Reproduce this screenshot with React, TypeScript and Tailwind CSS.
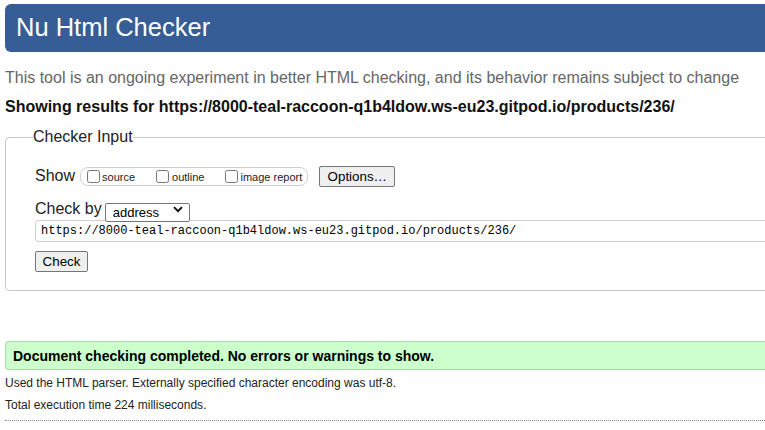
import React from "react";

const sans = { fontFamily: '"Liberation Sans", Arial, sans-serif' };

export default function App() {
  return (
    <div
      className="w-[765px] h-[430px] overflow-hidden bg-white pl-[5px] pt-[4px] text-[#222]"
      style={sans}
    >
      <div className="h-[48px] bg-[#365d95] rounded-l-[6px] flex items-center pl-[11px]">
        <h1 className="text-[25.5px] leading-[30px] -mt-[2px] text-white font-normal font-['Liberation_Sans',Arial,sans-serif]">
          Nu Html Checker
        </h1>
      </div>

      <p className="mt-[17px] text-[16px] leading-[18px] text-[#666] whitespace-nowrap">
        This tool is an ongoing experiment in better HTML checking, and its behavior remains subject to change
      </p>
      <p className="mt-[11px] text-[16px] leading-[18px] font-bold text-[#111] whitespace-nowrap">
        Showing results for https://8000-teal-raccoon-q1b4ldow.ws-eu23.gitpod.io/products/236/
      </p>

      <fieldset className="mt-[11px] border border-[#c8c8c8] border-r-0 rounded-l-[5px] pl-[29px] pt-[19px] pb-[17px]">
        <legend className="-ml-[2px] text-[16px] leading-[20px] text-[#222]">Checker Input</legend>

        <div className="h-[20px] flex items-center">
          <span className="text-[16px] leading-[18px]">Show</span>
          <div className="ml-[5px] h-[19px] border border-[#cfcfcf] rounded-[8px] flex items-center pl-[6px] pr-[5px]">
            <label className="flex items-center">
              <input type="checkbox" className="m-0 w-[13px] h-[13px]" />
              <span className="ml-[2px] text-[11px] leading-[13px] mt-[2px]">source</span>
            </label>
            <label className="flex items-center ml-[21px]">
              <input type="checkbox" className="m-0 w-[13px] h-[13px]" />
              <span className="ml-[3px] text-[11px] leading-[13px] mt-[2px]">outline</span>
            </label>
            <label className="flex items-center ml-[21px]">
              <input type="checkbox" className="m-0 w-[13px] h-[13px]" />
              <span className="ml-[2px] text-[11px] leading-[13px] mt-[2px]">image report</span>
            </label>
          </div>
          <button className="ml-[11px] h-[21px] w-[76px] border border-[#767676] rounded-[2px] bg-[#efefef] text-[13.33px] leading-[15px] text-black">
            Options…
          </button>
        </div>

        <div className="mt-[13px] h-[20px] flex items-center">
          <span className="text-[16px] leading-[18px]">Check by</span>
          <div className="relative ml-[3px] h-[19px] w-[85px]">
            <select className="appearance-none w-full h-full border border-[#767676] rounded-[2px] bg-white pl-[7px] text-[13px] leading-[15px] text-black">
              <option>address</option>
            </select>
            <svg
              className="absolute right-[7px] top-[6px] pointer-events-none"
              width="10"
              height="7"
              viewBox="0 0 10 7"
            >
              <path d="M1 1.2 L5 5.2 L9 1.2" fill="none" stroke="#000" strokeWidth="1.8" />
            </svg>
          </div>
        </div>

        <div className="mt-[1px] h-[22px] border border-[#cfcfcf] border-r-0 rounded-l-[4px] flex items-center pl-[5px]">
          <span className="text-[12px] leading-[14px] text-black whitespace-nowrap font-['Liberation_Mono',monospace]">
            https://8000-teal-raccoon-q1b4ldow.ws-eu23.gitpod.io/products/236/
          </span>
        </div>

        <div className="mt-[7px]">
          <button className="h-[21px] w-[53px] border border-[#767676] rounded-[2px] bg-[#efefef] text-[13.33px] leading-[15px] text-black">
            Check
          </button>
        </div>
      </fieldset>

      <div className="mt-[50px] h-[29px] bg-[#ccffcc] border border-[#a9d8a9] border-r-0 rounded-l-[4px] flex items-center pl-[7px]">
        <span className="text-[14px] leading-[16px] font-bold text-black whitespace-nowrap">
          Document checking completed. No errors or warnings to show.
        </span>
      </div>

      <p className="mt-[5px] text-[12px] leading-[16px] text-[#222] whitespace-nowrap">
        Used the HTML parser. Externally specified character encoding was utf-8.
      </p>
      <p className="mt-[6px] text-[12px] leading-[16px] text-[#222] whitespace-nowrap">
        Total execution time 224 milliseconds.
      </p>
      <div className="mt-[7px] border-t border-dotted border-[#888]" />
    </div>
  );
}
